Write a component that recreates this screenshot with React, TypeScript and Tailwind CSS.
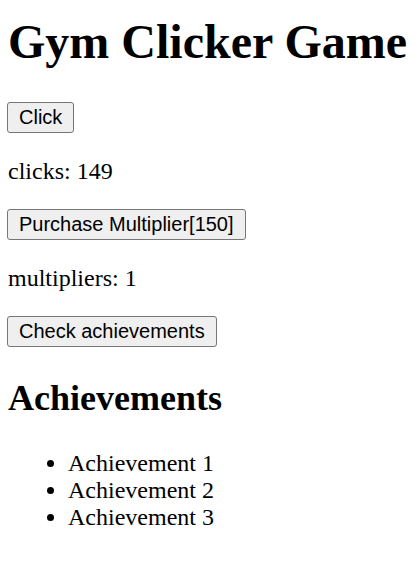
import React, { useState } from "react";

const btn =
  "block -ml-px h-[31px] px-[11px] border border-[#767676] rounded-[3px] bg-[#efefef] text-black text-[20px] leading-[23px] font-['Liberation_Sans',Arial,sans-serif]";

export default function App() {
  const [clicks, setClicks] = useState(149);
  const [mult, setMult] = useState(1);
  return (
    <div className="min-h-[561px] bg-white pl-2 pt-[14px] text-black font-['Liberation_Serif','Times_New_Roman',serif]">
      <h1 className="text-[48px] font-bold leading-[56px]">Gym Clicker Game</h1>
      <button className={`${btn} mt-[32px]`} onClick={() => setClicks(clicks + mult)}>
        Click
      </button>
      <p className="mt-[24px] text-[24px] leading-[28px]">clicks: {clicks}</p>
      <button
        className={`${btn} mt-[24px]`}
        onClick={() => {
          if (clicks >= 150) {
            setClicks(clicks - 150);
            setMult(mult + 1);
          }
        }}
      >
        Purchase Multiplier[150]
      </button>
      <p className="mt-[24px] text-[24px] leading-[28px]">multipliers: {mult}</p>
      <button className={`${btn} mt-[24px]`}>Check achievements</button>
      <h2 className="mt-[31px] text-[36px] font-bold leading-[41px]">Achievements</h2>
      <ul className="mt-[31px] list-disc pl-[60px] text-[24px] leading-[27px]">
        <li>Achievement 1</li>
        <li>Achievement 2</li>
        <li>Achievement 3</li>
      </ul>
    </div>
  );
}
